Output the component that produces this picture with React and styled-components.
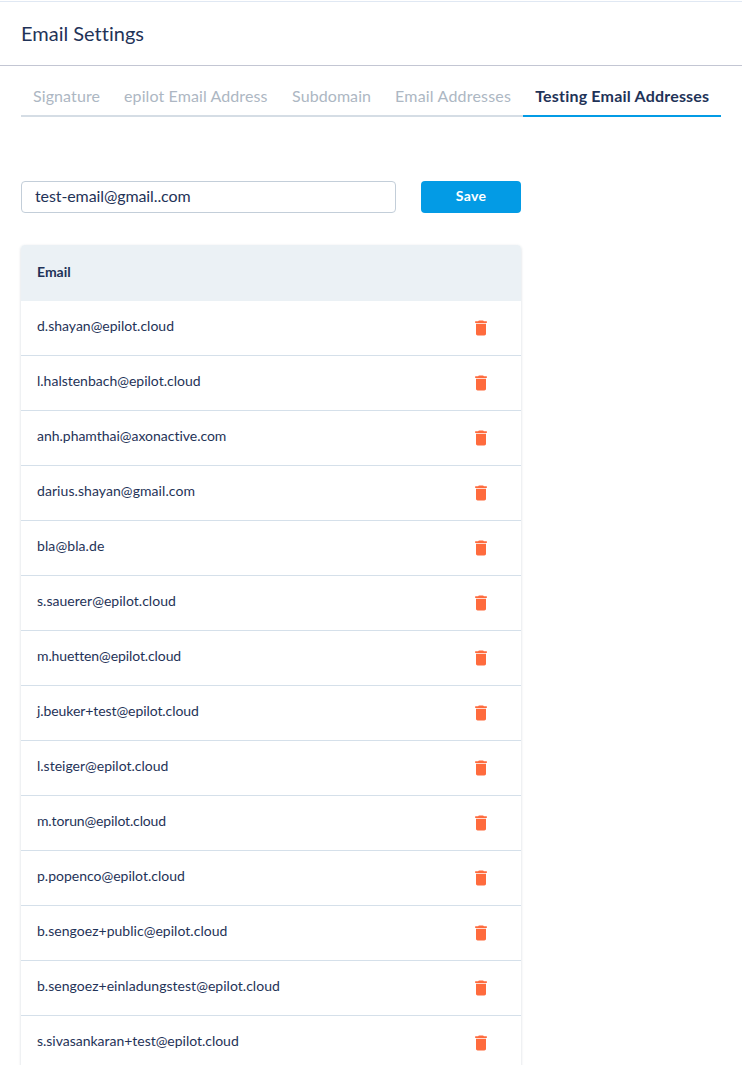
import React from "react";
import styled, { createGlobalStyle } from "styled-components";

const GlobalStyle = createGlobalStyle`
  *, *::before, *::after { box-sizing: border-box; }
  body {
    margin: 0;
    background: #fff;
    color: #1f3358;
    font-family: "Proxima Nova", Lato, "Liberation Sans", sans-serif;
    font-variant-ligatures: none;
  }
`;

const Page = styled.div`
  height: 100vh;
  overflow: hidden;
  padding-top: 1px;
`;

const Header = styled.header`
  display: flex;
  align-items: center;
  height: 65px;
  padding: 0 21px 1px;
  border-top: 1px solid #e0e8f3;
  border-bottom: 1px solid #c3c6d3;
`;

const Title = styled.h1`
  margin: 0;
  font-size: 20px;
  font-weight: 400;
  line-height: 24px;
  white-space: nowrap;
`;

const Tabs = styled.nav`
  display: flex;
  margin: 12px 21px 0;
  height: 39px;
`;

const Tab = styled.button`
  flex: 0 0 ${(p) => p.$width}px;
  padding: 0 12px 2px;
  border: 0;
  border-bottom: 2px solid ${(p) => (p.$active ? "#039be5" : "#d5dde5")};
  background: none;
  color: ${(p) => (p.$active ? "#1f3358" : "#adb7c3")};
  font-family: inherit;
  font-size: 16px;
  font-weight: ${(p) => (p.$active ? 700 : 400)};
  font-variant-ligatures: none;
  letter-spacing: ${(p) => p.$spacing || 0}px;
  line-height: 20px;
  text-align: left;
  white-space: nowrap;
`;

const Content = styled.main`
  width: 500px;
  margin: 64px 0 0 21px;
`;

const Form = styled.form`
  display: flex;
  justify-content: space-between;
  height: 32px;
`;

const EmailInput = styled.input`
  width: 375px;
  padding: 0 13px 3px;
  border: 1px solid #c3ced9;
  border-radius: 4px;
  background: #fff;
  color: #1f3358;
  font-family: inherit;
  font-size: 16px;
  letter-spacing: -0.1px;
  outline: none;
`;

const SaveButton = styled.button`
  width: 100px;
  padding: 0 0 3px;
  border: 0;
  border-radius: 4px;
  background: #039be5;
  color: #fff;
  font-family: inherit;
  font-size: 14px;
  font-weight: 700;
  letter-spacing: 0.3px;
`;

const Table = styled.section`
  margin-top: 32px;
  border-radius: 4px;
  box-shadow: 0 1px 3px rgba(40, 65, 90, 0.2);
`;

const TableHead = styled.div`
  display: flex;
  align-items: center;
  height: 56px;
  padding: 0 16px 3px;
  border-radius: 4px 4px 0 0;
  background: #ebf1f5;
  font-size: 14px;
  font-weight: 700;
`;

const Row = styled.div`
  display: flex;
  align-items: center;
  justify-content: space-between;
  height: 55px;
  padding: 0 30px 0 16px;
  border-bottom: 1px solid #d5e0ea;
  background: #fff;
  font-size: 14px;
`;

const Address = styled.span`
  padding-bottom: 5px;
  letter-spacing: ${(p) => p.$spacing || 0}px;
`;

const DeleteButton = styled.button`
  display: flex;
  padding: 0;
  border: 0;
  background: none;
  color: #ff6b3d;
`;

const TrashIcon = () => (
  <svg width="20" height="20" viewBox="0 0 24 24" fill="currentColor">
    <path d="M6 19c0 1.1.9 2 2 2h8c1.1 0 2-.9 2-2V7H6v12zM19 4h-3.5l-1-1h-5l-1 1H5v2h14V4z" />
  </svg>
);

const tabs = [
  { label: "Signature", width: 91, spacing: 0.1 },
  { label: "epilot Email Address", width: 168, spacing: 0.1 },
  { label: "Subdomain", width: 103, spacing: 0.08 },
  { label: "Email Addresses", width: 140, spacing: 0.2 },
  { label: "Testing Email Addresses", width: 198, spacing: 0.2, active: true },
];

const emails = [
  { address: "d.shayan@epilot.cloud" },
  { address: "l.halstenbach@epilot.cloud" },
  { address: "anh.phamthai@axonactive.com", spacing: -0.02 },
  { address: "darius.shayan@gmail.com", spacing: 0.07 },
  { address: "bla@bla.de", spacing: 0.1 },
  { address: "s.sauerer@epilot.cloud", spacing: 0.03 },
  { address: "m.huetten@epilot.cloud", spacing: -0.1 },
  { address: "j.beuker+test@epilot.cloud", spacing: -0.08 },
  { address: "l.steiger@epilot.cloud" },
  { address: "m.torun@epilot.cloud", spacing: -0.14 },
  { address: "p.popenco@epilot.cloud" },
  { address: "b.sengoez+public@epilot.cloud", spacing: 0.03 },
  { address: "b.sengoez+einladungstest@epilot.cloud", spacing: 0.03 },
  { address: "s.sivasankaran+test@epilot.cloud", spacing: -0.02 },
];

export default function App() {
  return (
    <Page>
      <GlobalStyle />
      <Header>
        <Title>Email Settings</Title>
      </Header>
      <Tabs>
        {tabs.map((t) => (
          <Tab key={t.label} $width={t.width} $active={t.active} $spacing={t.spacing}>
            {t.label}
          </Tab>
        ))}
      </Tabs>
      <Content>
        <Form onSubmit={(e) => e.preventDefault()}>
          <EmailInput defaultValue="test-email@gmail..com" aria-label="Email" />
          <SaveButton type="submit">Save</SaveButton>
        </Form>
        <Table>
          <TableHead>Email</TableHead>
          {emails.map(({ address, spacing }) => (
            <Row key={address}>
              <Address $spacing={spacing}>{address}</Address>
              <DeleteButton aria-label={"Delete " + address}>
                <TrashIcon />
              </DeleteButton>
            </Row>
          ))}
        </Table>
      </Content>
    </Page>
  );
}
